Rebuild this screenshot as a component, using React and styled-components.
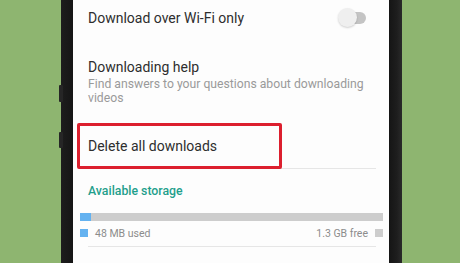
import React from "react";
import styled, { createGlobalStyle } from "styled-components";

const GlobalStyle = createGlobalStyle`
    html, body {
        margin: 0;
        padding: 0;
        background: #8eb570;
        overflow: hidden;
    }
    body {
        font-family: Roboto, "Noto Sans", "Liberation Sans", sans-serif;
    }
`;

const usedMb = 48;
const totalMb = 48 + 1300;

function App() {
    return (
        <>
            <GlobalStyle />
            <Stage>
                <Phone>
                    <SideButton $top={85} $height={17} />
                    <SideButton $top={132} $height={16} />
                    <Screen>
                        <SettingRow>
                            <Title>Download over Wi-Fi only</Title>
                            <Toggle>
                                <span className="track" />
                                <span className="thumb" />
                            </Toggle>
                        </SettingRow>

                        <HelpBlock>
                            <Title>Downloading help</Title>
                            <Subtitle>Find answers to your questions about downloading videos</Subtitle>
                        </HelpBlock>

                        <Highlight>
                            <Title>Delete all downloads</Title>
                        </Highlight>
                        <Divider $offset={-1} />

                        <SectionLabel>Available storage</SectionLabel>

                        <StorageBar>
                            <BarFill style={{ width: `${(usedMb / totalMb) * 100}%` }} />
                        </StorageBar>

                        <Legend>
                            <LegendItem>
                                <Swatch $color="#64b2f0" />
                                48 MB used
                            </LegendItem>
                            <LegendItem>
                                1.3 GB free
                                <Swatch $color="#cdcdcd" />
                            </LegendItem>
                        </Legend>
                        <Divider $offset={9} />
                    </Screen>
                </Phone>
            </Stage>
        </>
    );
}

const Stage = styled.div`
    width: 460px;
    height: 263px;
    display: flex;
    padding-left: 61px;
    box-sizing: border-box;
`;

const Phone = styled.div`
    position: relative;
    width: 341px;
    height: 100%;
    box-sizing: border-box;
    padding: 0 13px 0 12px;
    background: linear-gradient(to right, #1d1d1d 0, #151515 12px, #151515 328px, #1e1e1e 336px, #2a2a2a 341px);
`;

const SideButton = styled.div`
    position: absolute;
    left: -2px;
    top: ${(p) => p.$top}px;
    width: 4px;
    height: ${(p) => p.$height}px;
    background: #262626;
    border-radius: 1px;
`;

const Screen = styled.div`
    height: 100%;
    background: #fdfdfd;
    display: flex;
    flex-direction: column;
    overflow: hidden;
`;

const SettingRow = styled.div`
    height: 36px;
    display: flex;
    align-items: center;
    justify-content: space-between;
    padding: 0 23px 0 15px;
`;

const Title = styled.div`
    font-size: 14px;
    line-height: 16px;
    color: #2e2e2e;
`;

const Toggle = styled.div`
    position: relative;
    width: 28px;
    height: 20px;
    margin-top: -1px;

    .track {
        position: absolute;
        left: 2px;
        right: 0;
        top: 4px;
        height: 12px;
        border-radius: 6px;
        background: #c4c4c4;
    }
    .thumb {
        position: absolute;
        left: 0;
        top: 0;
        width: 19px;
        height: 19px;
        border-radius: 50%;
        background: #efefef;
        box-shadow: 0 1px 2px rgba(0, 0, 0, 0.18);
    }
`;

const HelpBlock = styled.div`
    padding: 23px 13px 0 15px;
    display: flex;
    flex-direction: column;
    gap: 2px;
`;

const Subtitle = styled.div`
    font-size: 12.2px;
    line-height: 14px;
    color: #9a9a9a;
`;

const Highlight = styled.div`
    position: relative;
    z-index: 1;
    margin: 18px 0 0 4px;
    width: 205px;
    height: 46px;
    box-sizing: border-box;
    border: 3px solid #dc1f2e;
    border-radius: 2px;
    display: flex;
    align-items: center;
    padding-left: 8px;
`;

const Divider = styled.div`
    height: 1px;
    margin: ${(p) => p.$offset}px 13px 0 15px;
    background: #e6e6e6;
`;

const SectionLabel = styled.div`
    margin: 15px 0 0 15px;
    font-size: 12.3px;
    line-height: 15px;
    font-weight: 500;
    color: #1f9f8c;
`;

const StorageBar = styled.div`
    margin: 14px 6px 0 7px;
    height: 8px;
    background: #cdcdcd;
    display: flex;
`;

const BarFill = styled.div`
    height: 100%;
    background: #64b2f0;
`;

const Legend = styled.div`
    margin: 8px 6px 0 7px;
    height: 8px;
    display: flex;
    align-items: center;
    justify-content: space-between;
`;

const LegendItem = styled.div`
    display: flex;
    align-items: center;
    gap: 7px;
    font-size: 10.5px;
    line-height: 13px;
    color: #8c8c8c;
`;

const Swatch = styled.span`
    width: 8px;
    height: 8px;
    background: ${(p) => p.$color};
`;

export default App;
